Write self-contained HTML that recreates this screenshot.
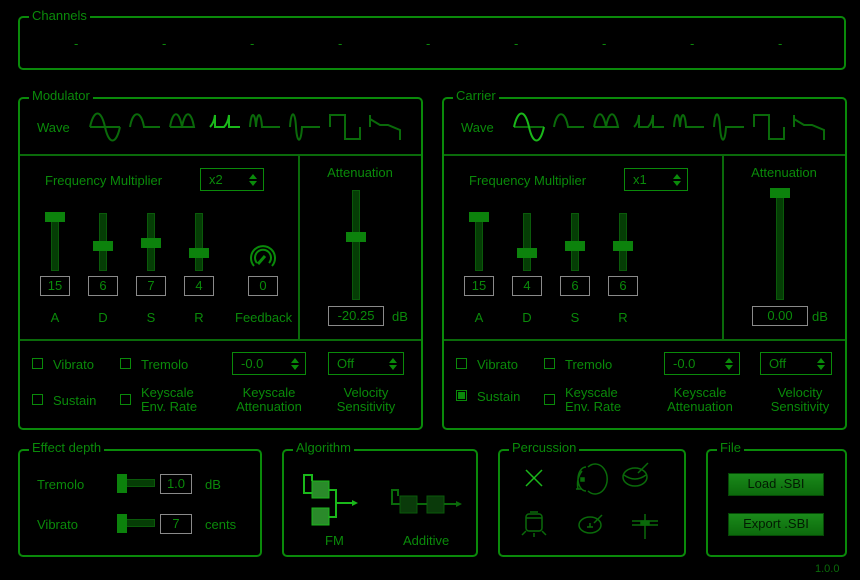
<!DOCTYPE html>
<html><head><meta charset="utf-8"><style>
*{margin:0;padding:0;box-sizing:border-box}
body{width:860px;height:580px;background:#000;position:relative;overflow:hidden;font-family:"Liberation Sans","DejaVu Sans",sans-serif;font-size:13px;color:#0a8a0a}
.a{position:absolute}
.p{position:absolute;border:2px solid #0a8a0a;border-radius:5px}
.t{position:absolute;background:#000;padding:0 3px;line-height:14px;color:#0a8a0a}
.l{position:absolute;line-height:14px;white-space:nowrap}
.c{text-align:center}
.hl{position:absolute;height:2px;background:#0a6a0a}
.vl{position:absolute;width:2px;background:#0a6a0a}
.tr{position:absolute;width:8px;background:#053d05;border:1px solid #0a5a0a}
.th{position:absolute;width:20px;height:10px;background:#0c820c}
.vb{position:absolute;border:1px solid #8a8a8a;height:20px;line-height:18px;text-align:center;color:#0a8a0a}
.sel{position:absolute;border:1px solid #0a8a0a;height:23px;line-height:21px;padding-left:8px}
.sel::after{content:"";position:absolute;right:6px;top:5px;border:4px solid transparent;border-bottom:5px solid #0a8a0a;border-top:0}
.sel::before{content:"";position:absolute;right:6px;top:12px;border:4px solid transparent;border-top:5px solid #0a8a0a;border-bottom:0}
.cb{position:absolute;width:11px;height:11px;border:1px solid #0a8a0a}
.btn{position:absolute;background:linear-gradient(#1a8a1a,#0c6a0c);border:1px solid #064a06;color:#021a02;text-align:center;line-height:20px}
</style></head><body>

<!-- Channels -->
<div class="p" style="left:18px;top:16px;width:828px;height:54px"></div>
<div class="t" style="left:29px;top:9px">Channels</div>
<div class="l" style="left:74px;top:37px">-</div><div class="l" style="left:162px;top:37px">-</div><div class="l" style="left:250px;top:37px">-</div><div class="l" style="left:338px;top:37px">-</div><div class="l" style="left:426px;top:37px">-</div><div class="l" style="left:514px;top:37px">-</div><div class="l" style="left:602px;top:37px">-</div><div class="l" style="left:690px;top:37px">-</div><div class="l" style="left:778px;top:37px">-</div>

<!-- Modulator -->
<div class="p" style="left:18px;top:97px;width:405px;height:333px"></div>
<div class="t" style="left:29px;top:89px">Modulator</div>
<div class="hl" style="left:20px;top:154px;width:401px"></div>
<div class="vl" style="left:298px;top:155px;height:185px"></div>
<div class="hl" style="left:20px;top:339px;width:401px"></div>
<div class="l" style="left:37px;top:121px">Wave</div>
<svg class="a" style="left:88px;top:110px" width="330" height="34" fill="none" stroke-width="2">
<g stroke="#0a6a0a">
<path d="M2 17 C6 -1 13 -1 17 17 C21 35 28 35 32 17 M2 17 H32"/>
<path d="M42 17 C45 0 53 0 56 17 H72"/>
<path d="M82 17 C85 0 91 0 94 17 C97 0 103 0 106 17 H82"/>
<path d="M162 17 C163 1 167 1 168 17 C169 1 173 1 174 17 H192"/>
<path d="M202 17 C203 0 207 0 208 17 C209 34 213 34 214 17 H232"/>
<path d="M242 17 V5 H257 V29 H272 V17"/>
<path d="M282 5 V17 M282 9 L292 15 H300 L312 20 V30"/>
</g>
<path stroke="#1ab81a" d="M122 17 Q126 13 127 5 V17 H136 Q140 13 141 5 V17 H152"/>
</svg>
<div class="l" style="left:45px;top:174px">Frequency Multiplier</div>
<div class="sel" style="left:200px;top:168px;width:64px">x2</div>
<div class="tr" style="left:51px;top:213px;height:58px"></div><div class="th" style="left:45px;top:212px"></div>
<div class="tr" style="left:99px;top:213px;height:58px"></div><div class="th" style="left:93px;top:241px"></div>
<div class="tr" style="left:147px;top:213px;height:58px"></div><div class="th" style="left:141px;top:238px"></div>
<div class="tr" style="left:195px;top:213px;height:58px"></div><div class="th" style="left:189px;top:248px"></div>
<svg class="a" style="left:248px;top:242px" width="30" height="30" fill="none" stroke="#0a8a0a" stroke-width="2"><path d="M6 24 A12 12 0 1 1 24 24"/><path d="M9 21 A8 8 0 1 1 21 21"/><path d="M10 22 L17 14" stroke-width="3"/></svg>
<div class="vb" style="left:40px;top:276px;width:30px">15</div>
<div class="vb" style="left:88px;top:276px;width:30px">6</div>
<div class="vb" style="left:136px;top:276px;width:30px">7</div>
<div class="vb" style="left:184px;top:276px;width:30px">4</div>
<div class="vb" style="left:248px;top:276px;width:30px">0</div>
<div class="l c" style="left:45px;top:311px;width:20px">A</div>
<div class="l c" style="left:93px;top:311px;width:20px">D</div>
<div class="l c" style="left:141px;top:311px;width:20px">S</div>
<div class="l c" style="left:189px;top:311px;width:20px">R</div>
<div class="l" style="left:235px;top:311px">Feedback</div>
<div class="l c" style="left:310px;top:166px;width:100px">Attenuation</div>
<div class="tr" style="left:352px;top:190px;height:110px"></div><div class="th" style="left:346px;top:232px"></div>
<div class="vb" style="left:328px;top:306px;width:56px">-20.25</div>
<div class="l" style="left:392px;top:310px">dB</div>
<div class="cb" style="left:32px;top:358px"></div><div class="l" style="left:53px;top:358px">Vibrato</div>
<div class="cb" style="left:120px;top:358px"></div><div class="l" style="left:141px;top:358px">Tremolo</div>
<div class="cb" style="left:32px;top:394px"></div><div class="l" style="left:53px;top:394px">Sustain</div>
<div class="cb" style="left:120px;top:394px"></div><div class="l" style="left:141px;top:386px">Keyscale<br>Env. Rate</div>
<div class="sel" style="left:232px;top:352px;width:74px">-0.0</div>
<div class="sel" style="left:328px;top:352px;width:76px">Off</div>
<div class="l c" style="left:219px;top:386px;width:100px">Keyscale<br>Attenuation</div>
<div class="l c" style="left:316px;top:386px;width:100px">Velocity<br>Sensitivity</div>

<!-- Carrier -->
<div class="p" style="left:442px;top:97px;width:405px;height:333px"></div>
<div class="t" style="left:453px;top:89px">Carrier</div>
<div class="hl" style="left:444px;top:154px;width:401px"></div>
<div class="vl" style="left:722px;top:155px;height:185px"></div>
<div class="hl" style="left:444px;top:339px;width:401px"></div>
<div class="l" style="left:461px;top:121px">Wave</div>
<svg class="a" style="left:512px;top:110px" width="330" height="34" fill="none" stroke-width="2">
<g stroke="#0a6a0a">
<path d="M42 17 C45 0 53 0 56 17 H72"/>
<path d="M82 17 C85 0 91 0 94 17 C97 0 103 0 106 17 H82"/>
<path d="M122 17 Q126 13 127 5 V17 H136 Q140 13 141 5 V17 H152"/>
<path d="M162 17 C163 1 167 1 168 17 C169 1 173 1 174 17 H192"/>
<path d="M202 17 C203 0 207 0 208 17 C209 34 213 34 214 17 H232"/>
<path d="M242 17 V5 H257 V29 H272 V17"/>
<path d="M282 5 V17 M282 9 L292 15 H300 L312 20 V30"/>
<path d="M2 17 H32"/>
</g>
<path stroke="#1ab81a" d="M2 17 C6 -1 13 -1 17 17 C21 35 28 35 32 17"/>
</svg>
<div class="l" style="left:469px;top:174px">Frequency Multiplier</div>
<div class="sel" style="left:624px;top:168px;width:64px">x1</div>
<div class="tr" style="left:475px;top:213px;height:58px"></div><div class="th" style="left:469px;top:212px"></div>
<div class="tr" style="left:523px;top:213px;height:58px"></div><div class="th" style="left:517px;top:248px"></div>
<div class="tr" style="left:571px;top:213px;height:58px"></div><div class="th" style="left:565px;top:241px"></div>
<div class="tr" style="left:619px;top:213px;height:58px"></div><div class="th" style="left:613px;top:241px"></div>
<div class="vb" style="left:464px;top:276px;width:30px">15</div>
<div class="vb" style="left:512px;top:276px;width:30px">4</div>
<div class="vb" style="left:560px;top:276px;width:30px">6</div>
<div class="vb" style="left:608px;top:276px;width:30px">6</div>
<div class="l c" style="left:469px;top:311px;width:20px">A</div>
<div class="l c" style="left:517px;top:311px;width:20px">D</div>
<div class="l c" style="left:565px;top:311px;width:20px">S</div>
<div class="l c" style="left:613px;top:311px;width:20px">R</div>
<div class="l c" style="left:734px;top:166px;width:100px">Attenuation</div>
<div class="tr" style="left:776px;top:190px;height:110px"></div><div class="th" style="left:770px;top:188px"></div>
<div class="vb" style="left:752px;top:306px;width:56px">0.00</div>
<div class="l" style="left:812px;top:310px">dB</div>
<div class="cb" style="left:456px;top:358px"></div><div class="l" style="left:477px;top:358px">Vibrato</div>
<div class="cb" style="left:544px;top:358px"></div><div class="l" style="left:565px;top:358px">Tremolo</div>
<div class="cb" style="left:456px;top:390px;padding:1px"><div style="width:7px;height:7px;background:#0a8a0a"></div></div><div class="l" style="left:477px;top:390px">Sustain</div>
<div class="cb" style="left:544px;top:394px"></div><div class="l" style="left:565px;top:386px">Keyscale<br>Env. Rate</div>
<div class="sel" style="left:664px;top:352px;width:76px">-0.0</div>
<div class="sel" style="left:760px;top:352px;width:72px">Off</div>
<div class="l c" style="left:650px;top:386px;width:100px">Keyscale<br>Attenuation</div>
<div class="l c" style="left:750px;top:386px;width:100px">Velocity<br>Sensitivity</div>

<!-- Effect depth -->
<div class="p" style="left:18px;top:449px;width:244px;height:108px"></div>
<div class="t" style="left:29px;top:441px">Effect depth</div>
<div class="l" style="left:37px;top:478px">Tremolo</div>
<div class="a" style="left:126px;top:479px;width:29px;height:8px;background:#053d05;border:1px solid #0a5a0a"></div>
<div class="a" style="left:117px;top:474px;width:10px;height:19px;background:#0c820c"></div>
<div class="vb" style="left:160px;top:474px;width:32px">1.0</div>
<div class="l" style="left:205px;top:478px">dB</div>
<div class="l" style="left:37px;top:518px">Vibrato</div>
<div class="a" style="left:126px;top:519px;width:29px;height:8px;background:#053d05;border:1px solid #0a5a0a"></div>
<div class="a" style="left:117px;top:514px;width:10px;height:19px;background:#0c820c"></div>
<div class="vb" style="left:160px;top:514px;width:32px">7</div>
<div class="l" style="left:205px;top:518px">cents</div>

<!-- Algorithm -->
<div class="p" style="left:282px;top:449px;width:196px;height:108px"></div>
<div class="t" style="left:293px;top:441px">Algorithm</div>
<svg class="a" style="left:282px;top:449px" width="196" height="108" fill="none">
<path d="M34 44 H22 V26 H30 V32" stroke="#1ab81a" stroke-width="2"/>
<rect x="30" y="32" width="17" height="17" fill="#2a8a2a" stroke="#1ab81a"/>
<rect x="30" y="59" width="17" height="17" fill="#2a8a2a" stroke="#1ab81a"/>
<path d="M47 41 H54 V68 H47 M54 54 H72" stroke="#1ab81a" stroke-width="2"/>
<path d="M70 51 L76 54 L70 57Z" fill="#1ab81a"/>
<path d="M119 55 H110 V41 H116 V47" stroke="#0a6a0a" stroke-width="2"/>
<rect x="118" y="47" width="17" height="17" fill="#0a3a0a" stroke="#0a5a0a"/>
<rect x="145" y="47" width="17" height="17" fill="#0a3a0a" stroke="#0a5a0a"/>
<path d="M135 55 H145 M162 55 H176" stroke="#0a6a0a" stroke-width="2"/>
<path d="M174 52 L180 55 L174 58Z" fill="#0a6a0a"/>
</svg>
<div class="l" style="left:325px;top:534px">FM</div>
<div class="l" style="left:403px;top:534px">Additive</div>

<!-- Percussion -->
<div class="p" style="left:498px;top:449px;width:188px;height:108px"></div>
<div class="t" style="left:509px;top:441px">Percussion</div>
<svg class="a" style="left:498px;top:449px" width="188" height="108" fill="none" stroke-width="1.5">
<path d="M28 21 L44 37 M44 21 L28 37" stroke="#1ab81a"/>
<g stroke="#0a6a0a">
<path d="M90 18 A12 15 0 1 1 90 42 M88 18 A8 12 0 0 0 88 42 M84 22 Q78 30 80 40"/>
<rect x="83" y="29" width="3" height="3" fill="#0a6a0a"/>
<path d="M78 40 H84"/>
<ellipse cx="137" cy="28" rx="12" ry="9"/><path d="M126 26 Q137 34 148 26 M140 24 L150 14"/>
<rect x="28" y="65" width="16" height="17" rx="3"/><path d="M28 69 H44 M28 82 L24 86 M44 82 L48 86 M36 84 V88 M32 63 H40"/>
<ellipse cx="92" cy="76" rx="11" ry="8"/><path d="M96 74 L104 66 M89 78 H95 M92 74 V78"/>
<path d="M134 72 H160 M134 76 H160 M147 65 V90"/><rect x="143" y="72" width="8" height="4" fill="#0a6a0a"/>
</g>
</svg>

<!-- File -->
<div class="p" style="left:706px;top:449px;width:141px;height:108px"></div>
<div class="t" style="left:717px;top:441px">File</div>
<div class="btn" style="left:728px;top:473px;width:96px;height:23px">Load .SBI</div>
<div class="btn" style="left:728px;top:513px;width:96px;height:23px">Export .SBI</div>
<div class="l" style="left:815px;top:562px;font-size:11px;color:#0a6a0a">1.0.0</div>
</body></html>
